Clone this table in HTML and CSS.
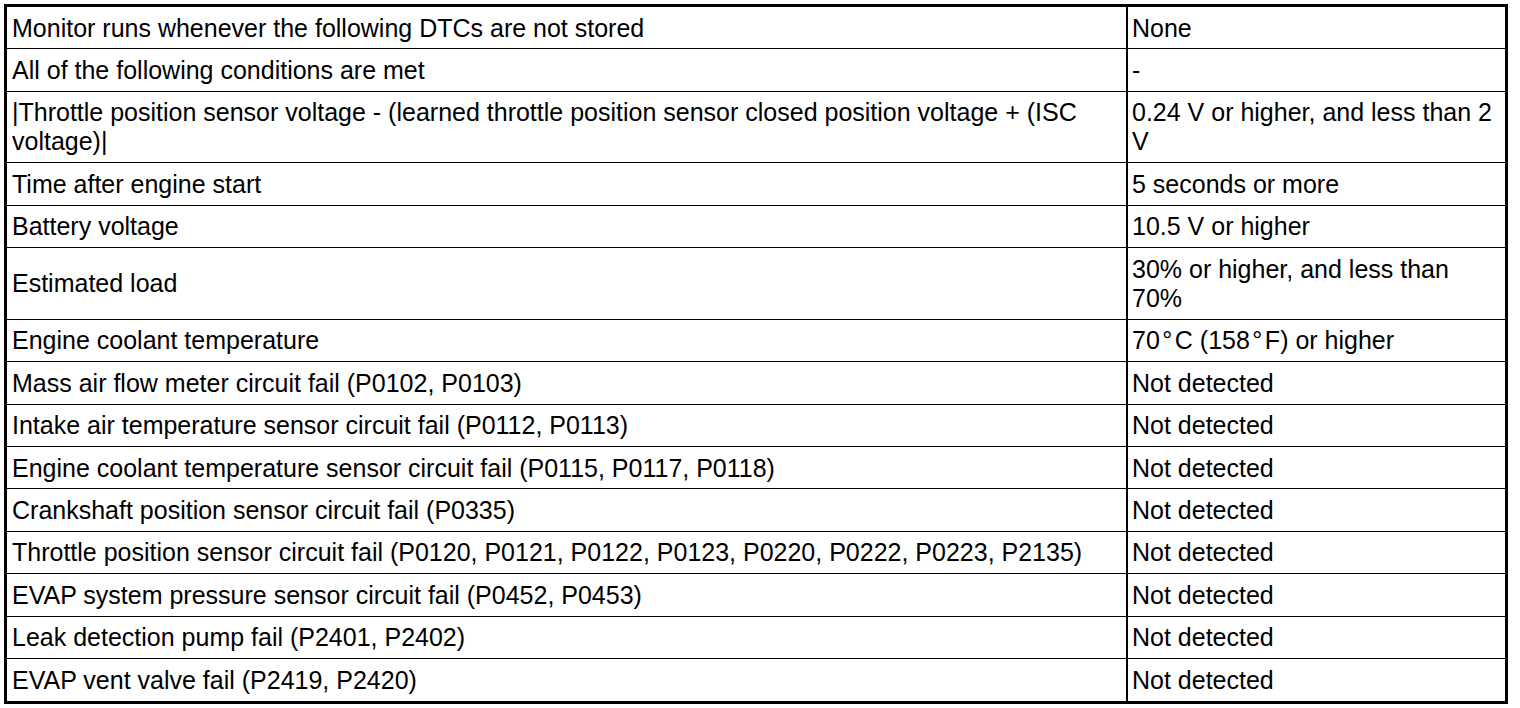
FILE: index.html
```html
<!DOCTYPE html>
<html>
<head>
<meta charset="utf-8">
<link rel="stylesheet" href="styles.css">
</head>
<body>
<table class="spec">
<tr><td class="cond">Monitor runs whenever the following DTCs are not stored</td><td class="val">None</td></tr>
<tr><td class="cond">All of the following conditions are met</td><td class="val">-</td></tr>
<tr><td class="cond">|Throttle position sensor voltage - (learned throttle position sensor closed position voltage + (ISC voltage)|</td><td class="val">0.24 V or higher, and less than 2 V</td></tr>
<tr><td class="cond">Time after engine start</td><td class="val">5 seconds or more</td></tr>
<tr><td class="cond">Battery voltage</td><td class="val">10.5 V or higher</td></tr>
<tr><td class="cond">Estimated load</td><td class="val">30% or higher, and less than 70%</td></tr>
<tr><td class="cond">Engine coolant temperature</td><td class="val">70<span class="deg">°</span>C (158<span class="deg">°</span>F) or higher</td></tr>
<tr><td class="cond">Mass air flow meter circuit fail (P0102, P0103)</td><td class="val">Not detected</td></tr>
<tr><td class="cond">Intake air temperature sensor circuit fail (P0112, P0113)</td><td class="val">Not detected</td></tr>
<tr><td class="cond">Engine coolant temperature sensor circuit fail (P0115, P0117, P0118)</td><td class="val">Not detected</td></tr>
<tr><td class="cond">Crankshaft position sensor circuit fail (P0335)</td><td class="val">Not detected</td></tr>
<tr><td class="cond">Throttle position sensor circuit fail (P0120, P0121, P0122, P0123, P0220, P0222, P0223, P2135)</td><td class="val">Not detected</td></tr>
<tr><td class="cond">EVAP system pressure sensor circuit fail (P0452, P0453)</td><td class="val">Not detected</td></tr>
<tr><td class="cond">Leak detection pump fail (P2401, P2402)</td><td class="val">Not detected</td></tr>
<tr><td class="cond">EVAP vent valve fail (P2419, P2420)</td><td class="val">Not detected</td></tr>
</table>
</body>
</html>
```
FILE: styles.css
```css
html, body {
  margin: 0;
  padding: 0;
  background: #fff;
}
body {
  padding: 4px;
  font-family: "Liberation Sans", Arial, sans-serif;
  font-size: 25px;
  color: #000;
}
.spec {
  width: 1504px;
  border: 3px solid #000;
  border-collapse: separate;
  border-spacing: 0;
  table-layout: fixed;
}
.spec td {
  padding: 6.6px 5px 5.85px 5px;
  line-height: 29px;
  border-bottom: 1px solid #000;
  vertical-align: middle;
  text-align: left;
}
.spec tr:last-child td {
  border-bottom: none;
}
.spec .cond {
  width: 1109px;
  border-right: 2px solid #000;
}
.spec .val {
  padding-left: 4px;
}
.deg {
  margin: 0 2.5px;
}
```
